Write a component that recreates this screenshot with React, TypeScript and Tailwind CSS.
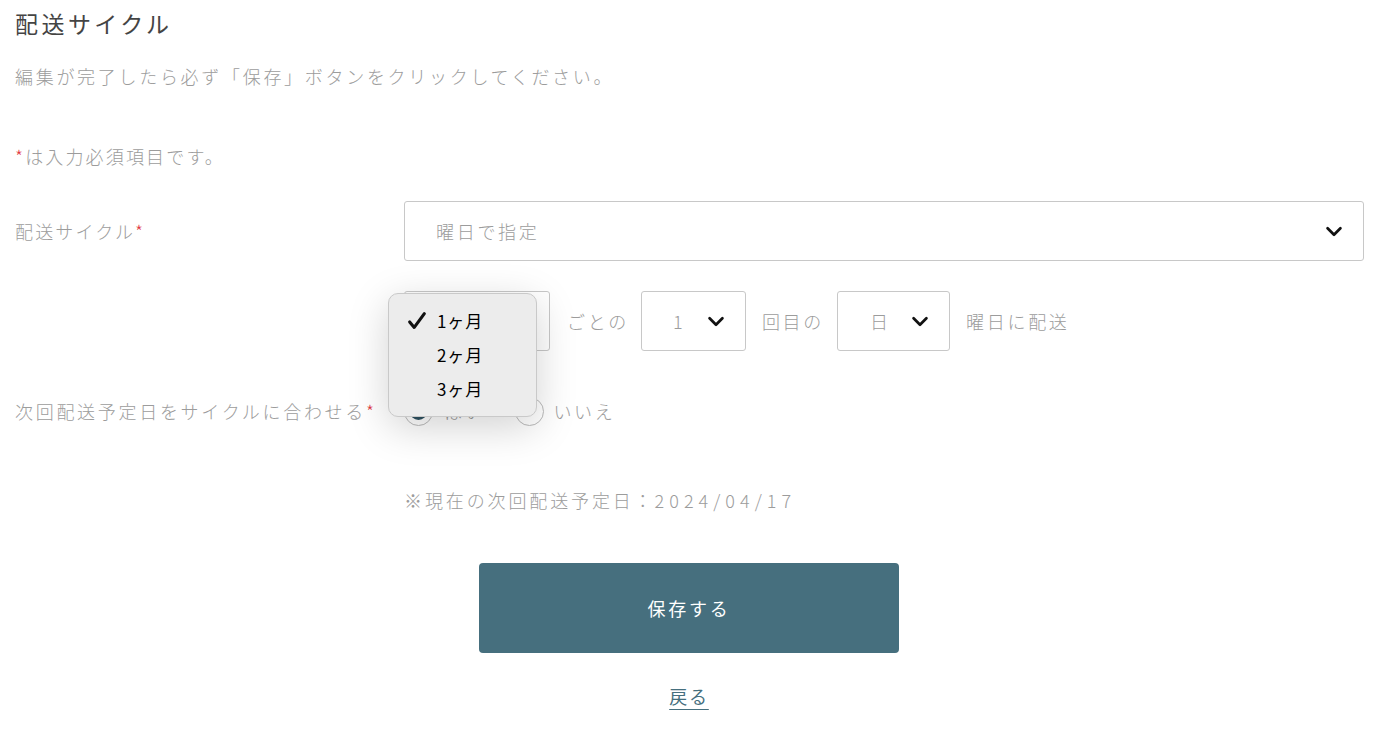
import { useState } from 'react';

const font = { fontFamily: '"Noto Sans CJK JP", "Noto Sans", sans-serif' };

function Chevron() {
  return (
    <svg className="w-[22px] h-[22px]" viewBox="0 0 24 24" fill="none" stroke="#111" strokeWidth={3} strokeLinecap="round" strokeLinejoin="round">
      <path d="M5 9l7 7 7-7" />
    </svg>
  );
}

function Req() {
  return <span className="text-[#e0393e]">*</span>;
}

export default function App() {
  const [answer, setAnswer] = useState<'yes' | 'no'>('yes');

  return (
    <div className="min-h-[730px] bg-white text-[#9c9c9c] font-light pl-[15px] pr-[18px]" style={font}>
      <h1 className="pt-[6px] text-[23px] leading-[34px] tracking-[0.15em] text-[#444] font-normal">配送サイクル</h1>
      <p className="mt-[20px] text-[18px] leading-[32px] tracking-[0.15em]">
        編集が完了したら必ず「保存」ボタンをクリックしてください。
      </p>
      <p className="mt-[48px] text-[18px] leading-[32px] tracking-[0.12em]">
        <Req />は入力必須項目です。
      </p>

      <div className="mt-[29px] flex">
        <div className="w-[389px] shrink-0 pt-[14px] text-[18px] leading-[32px] tracking-[0.12em]">
          配送サイクル<Req />
        </div>
        <div className="flex-1 h-[60px] border border-[#c8c8c8] rounded-[3px] flex items-center justify-between pl-[31px] pr-[18px] text-[18px] tracking-[0.15em]">
          <span>曜日で指定</span>
          <Chevron />
        </div>
      </div>

      <div className="mt-[30px] flex">
        <div className="w-[389px] shrink-0" />
        <div className="relative flex items-center text-[18px] tracking-[0.15em]">
          <div className="w-[146px] h-[60px] border border-[#c8c8c8] rounded-[3px] flex items-center justify-end pr-[16px]">
            <Chevron />
          </div>
          <span className="ml-[17px]">ごとの</span>
          <div className="ml-[12px] w-[105px] h-[60px] border border-[#c8c8c8] rounded-[3px] flex items-center justify-between pl-[31px] pr-[18px]">
            <span>1</span>
            <Chevron />
          </div>
          <span className="ml-[16px]">回目の</span>
          <div className="ml-[13px] w-[113px] h-[60px] border border-[#c8c8c8] rounded-[3px] flex items-center justify-between pl-[32px] pr-[18px]">
            <span>日</span>
            <Chevron />
          </div>
          <span className="ml-[16px]">曜日に配送</span>

          <div className="absolute left-[-16px] top-[2px] z-10 w-[149px] rounded-[10px] border border-[#c9c9c9] bg-[#ececec] py-[10px] text-[17px] tracking-normal text-black font-normal shadow-[0_10px_40px_rgba(0,0,0,0.18)]">
            {['1ヶ月', '2ヶ月', '3ヶ月'].map((m, i) => (
              <div key={m} className="flex items-center h-[34px] pl-[17px]">
                <span className="w-[31px] flex items-center">
                  {i === 0 && (
                    <svg className="w-[22px] h-[22px]" viewBox="0 0 24 24" fill="none" stroke="#111" strokeWidth={3.4} strokeLinecap="round" strokeLinejoin="round">
                      <path d="M4 13l5 6L20 4" />
                    </svg>
                  )}
                </span>
                <span className="tracking-[0.05em]">{m}</span>
              </div>
            ))}
          </div>
        </div>
      </div>

      <div className="mt-[44px] flex items-center">
        <div className="w-[389px] shrink-0 text-[18px] leading-[32px] tracking-[0.15em]">
          次回配送予定日をサイクルに合わせる<Req />
        </div>
        <div className="flex items-center text-[18px] tracking-[0.15em]">
          <button onClick={() => setAnswer('yes')} className="flex items-center">
            <span className="w-[29px] h-[29px] rounded-full border border-[#bbb] flex items-center justify-center">
              {answer === 'yes' && <span className="w-[17px] h-[17px] rounded-full bg-[#2f5262]" />}
            </span>
            <span className="ml-[11px] text-[#9c9c9c]">はい</span>
          </button>
          <button onClick={() => setAnswer('no')} className="ml-[30px] flex items-center">
            <span className="w-[29px] h-[29px] rounded-full border border-[#bbb] flex items-center justify-center">
              {answer === 'no' && <span className="w-[17px] h-[17px] rounded-full bg-[#2f5262]" />}
            </span>
            <span className="ml-[9px] text-[#9c9c9c]">いいえ</span>
          </button>
        </div>
      </div>

      <p className="mt-[57px] ml-[389px] text-[18px] leading-[32px] tracking-[0.16em]">
        ※現在の次回配送予定日：<span className="tracking-[0.28em]">2024/04/17</span>
      </p>

      <div className="mt-[47px] flex justify-center">
        <button className="ml-[-1px] w-[420px] h-[90px] rounded-[4px] bg-[#466f7e] text-white text-[18px] tracking-[0.15em] font-normal">
          保存する
        </button>
      </div>

      <div className="mt-[27px] flex justify-center">
        <a href="#" className="ml-[-1px] text-[18px] leading-[32px] tracking-[0.1em] text-[#466f7e] font-normal underline underline-offset-[5px]">
          戻る
        </a>
      </div>
    </div>
  );
}
